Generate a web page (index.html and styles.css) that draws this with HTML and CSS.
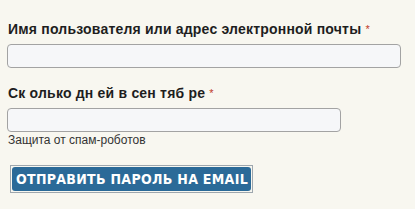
FILE: index.html
```html
<!DOCTYPE html>
<html lang="ru">
<head>
  <meta charset="UTF-8">
  <title>Восстановление пароля</title>
  <link rel="stylesheet" href="styles.css">
</head>
<body>
  <form class="lost-form">
    <div class="field">
      <label for="user_login">Имя пользователя или адрес электронной почты <span class="req">*</span></label>
      <input type="text" id="user_login" class="input-wide">
    </div>

    <div class="field">
      <label for="captcha">Ск олько дн ей в сен тяб ре <span class="req">*</span></label>
      <input type="text" id="captcha" class="input-short">
      <p class="hint">Защита от спам-роботов</p>
    </div>

    <span class="btn-frame">
      <button type="button" class="submit-btn">Отправить пароль на email</button>
    </span>
  </form>
</body>
</html>
```

FILE: styles.css
```css
body {
  margin: 0;
  background-color: #f8f7f0;
  font-family: 'Liberation Sans', Arial, sans-serif;
  color: #1e1e1e;
}

.lost-form {
  padding: 21px 0 0 7px;
}

.field {
  margin-bottom: 17px;
}

.field label {
  display: block;
  padding-left: 1px;
  font-size: 14px;
  line-height: 17px;
  font-weight: bold;
  letter-spacing: 0.2px;
  margin-bottom: 6px;
}

.req {
  color: #c0392b;
  font-size: 11px;
  vertical-align: top;
  font-weight: normal;
}

input[type="text"] {
  display: block;
  box-sizing: border-box;
  height: 24px;
  margin: 0;
  border: 1px solid #a3a3a3;
  border-radius: 4px;
  background-color: #f6f7f9;
}

.input-wide {
  width: 394px;
}

.input-short {
  width: 334px;
}

.hint {
  margin: 1px 0 0 1px;
  font-size: 12px;
  line-height: 14px;
  color: #333;
}

.btn-frame {
  display: inline-block;
  margin: 1px 0 0 3px;
  border: 1px solid #9ea7ae;
  padding: 1px;
}

.submit-btn {
  display: block;
  margin: 0;
  border: none;
  border-radius: 3px;
  padding: 0 3px 0 4px;
  height: 24px;
  background-color: #2b6a98;
  color: #fff;
  font-family: 'DejaVu Sans Condensed', 'DejaVu Sans', Verdana, sans-serif;
  font-stretch: condensed;
  font-size: 14px;
  font-weight: bold;
  letter-spacing: 0.3px;
  text-transform: uppercase;
}
```
